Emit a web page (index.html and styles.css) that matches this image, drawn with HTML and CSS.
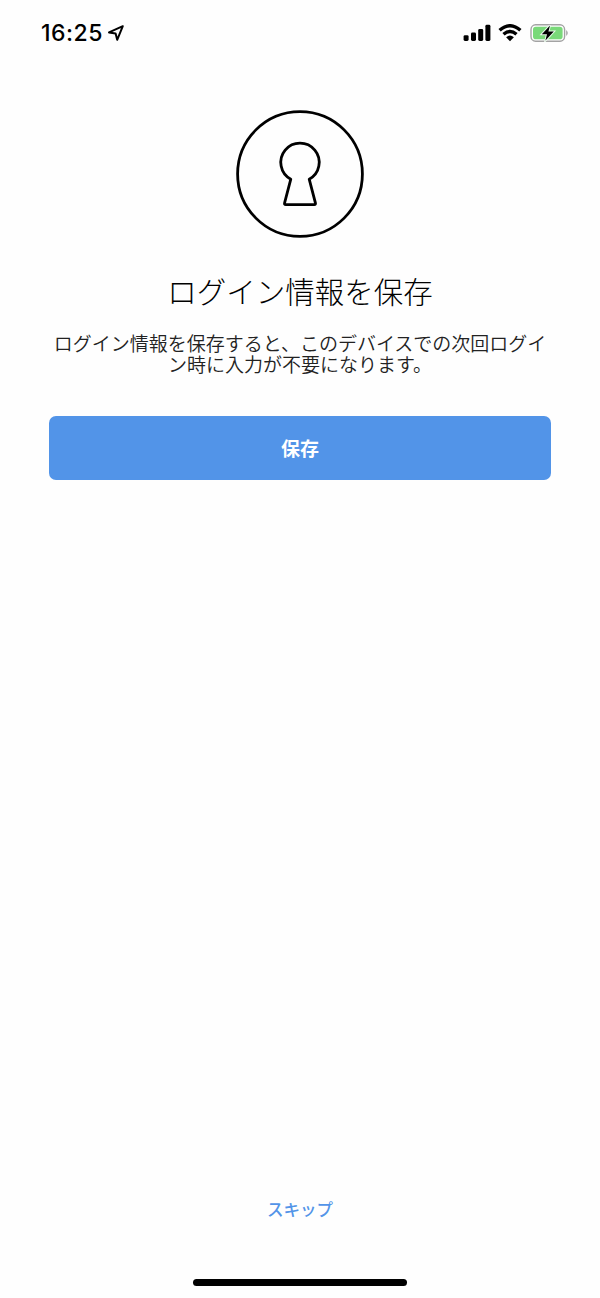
FILE: index.html
```
<!DOCTYPE html>
<html lang="ja">
    <head>
        <meta charset="utf-8" />
        <title>ログイン情報を保存</title>
        <link rel="stylesheet" href="styles.css">
    </head>

    <body>
        <div class="screen">
            <!-- status bar -->
            <div class="status">
                <div class="status-left">
                    <span class="time">16:25</span>
                    <svg class="location" width="18" height="18" viewBox="0 0 18 18">
                        <path d="M15.8 2.2 L2 8.4 L8.6 9.4 L10.2 15.8 Z" />
                    </svg>
                </div>
                <div class="status-right">
                    <svg width="28" height="18" viewBox="0 0 28 18">
                        <rect x="0.6" y="11.2" width="5" height="5.8" rx="1.4" />
                        <rect x="8" y="8.6" width="5" height="8.4" rx="1.4" />
                        <rect x="15.2" y="5" width="5" height="12" rx="1.4" />
                        <rect x="22.4" y="0.8" width="5" height="16.2" rx="1.4" />
                    </svg>
                    <svg class="wifi" width="24" height="18" viewBox="0 0 24 18">
                        <path d="M1.6 6.3 Q12 -2.8 22.4 6.3" />
                        <path d="M5.5 10.2 Q12 4.6 18.5 10.2" />
                        <path class="wifi-dot" d="M8.1 13.2 Q12 10 15.9 13.2 L12 17.2 Z" />
                    </svg>
                    <svg class="battery" width="39" height="18" viewBox="0 0 39 18">
                        <rect class="battery-case" x="1" y="0.8" width="33.6" height="16.4" rx="4.6" />
                        <rect class="battery-level" x="3" y="2.8" width="29.6" height="12.4" rx="2.8" />
                        <path class="battery-tip" d="M36.2 6 Q39.4 9 36.2 12 Z" />
                        <path class="bolt" d="M20 1.4 L11.8 10.2 H17 L15.4 16.6 L23.8 7.6 H18.4 Z" />
                    </svg>
                </div>
            </div>

            <div class="content">
                <svg class="keyhole" width="128" height="128" viewBox="0 0 128 128">
                    <circle cx="64" cy="64" r="62.4" />
                    <path d="M54.8 69.2 A19.2 19.2 0 1 1 73.2 69.2 L79.4 92.8 Q79.9 94.6 78.2 94.6 H49.8 Q48.1 94.6 48.6 92.8 Z" />
                </svg>
                <h1 class="title">ログイン情報を保存</h1>
                <p class="text">ログイン情報を保存すると、このデバイスでの次回ログイン時に入力が不要になります。</p>
                <button class="save">保存</button>
            </div>

            <div class="footer">
                <a class="skip">スキップ</a>
                <div class="home-bar"></div>
            </div>
        </div>
    </body>
</html>
```
FILE: styles.css
```
body {
    margin: 0;
    background: #fefefe;
    color: #000;
    font-family: "Noto Sans CJK JP", sans-serif;
}

.screen {
    display: flex;
    flex-direction: column;
    width: 600px;
    height: 1298px;
}

.status {
    display: flex;
    justify-content: space-between;
    box-sizing: border-box;
    height: 110px;
    padding: 23px 31px 0 41px;
}

.status-left,
.status-right {
    display: flex;
    align-items: center;
    height: 20px;
}

.time {
    font-family: Inter, sans-serif;
    font-size: 23px;
    font-weight: 500;
    letter-spacing: 0.5px;
    line-height: 20px;
}

.location {
    margin-left: 4px;
    fill: none;
    stroke: #000;
    stroke-width: 2;
    stroke-linejoin: round;
}

.wifi {
    margin: 0 8px 0 7px;
    fill: none;
    stroke: #000;
    stroke-width: 3.4;
}

.wifi-dot {
    fill: #000;
    stroke: none;
}

.battery-case {
    fill: none;
    stroke: #a3a3a3;
    stroke-width: 1.4;
}

.battery-level {
    fill: #79d979;
}

.battery-tip {
    fill: #a3a3a3;
}

.bolt {
    stroke: #e9faeb;
    stroke-width: 2;
    paint-order: stroke;
}

.content {
    display: flex;
    flex-direction: column;
    align-items: center;
    flex: 1;
    padding: 0 49px;
}

.keyhole {
    fill: none;
    stroke: #000;
    stroke-width: 2.8;
    stroke-linejoin: round;
}

.title {
    margin: 32px 0 0;
    font-size: 29.5px;
    font-weight: 300;
    line-height: 40px;
    white-space: nowrap;
}

.text {
    width: 500px;
    margin: 22px 0 0;
    color: #222;
    font-size: 19px;
    font-weight: 350;
    line-height: 21px;
    text-align: center;
}

.save {
    width: 502px;
    height: 64px;
    margin-top: 42px;
    padding: 0 0 2px;
    border: 0;
    border-radius: 7px;
    background: #5294e8;
    color: #fff;
    font-family: inherit;
    font-size: 19px;
    font-weight: 600;
}

.footer {
    display: flex;
    flex-direction: column;
    align-items: center;
    padding-bottom: 12px;
}

.skip {
    color: #5294e8;
    font-size: 16.5px;
    font-weight: 500;
    line-height: 24px;
}

.home-bar {
    width: 214px;
    height: 7px;
    margin-top: 58px;
    border-radius: 4px;
    background: #000;
}
```
